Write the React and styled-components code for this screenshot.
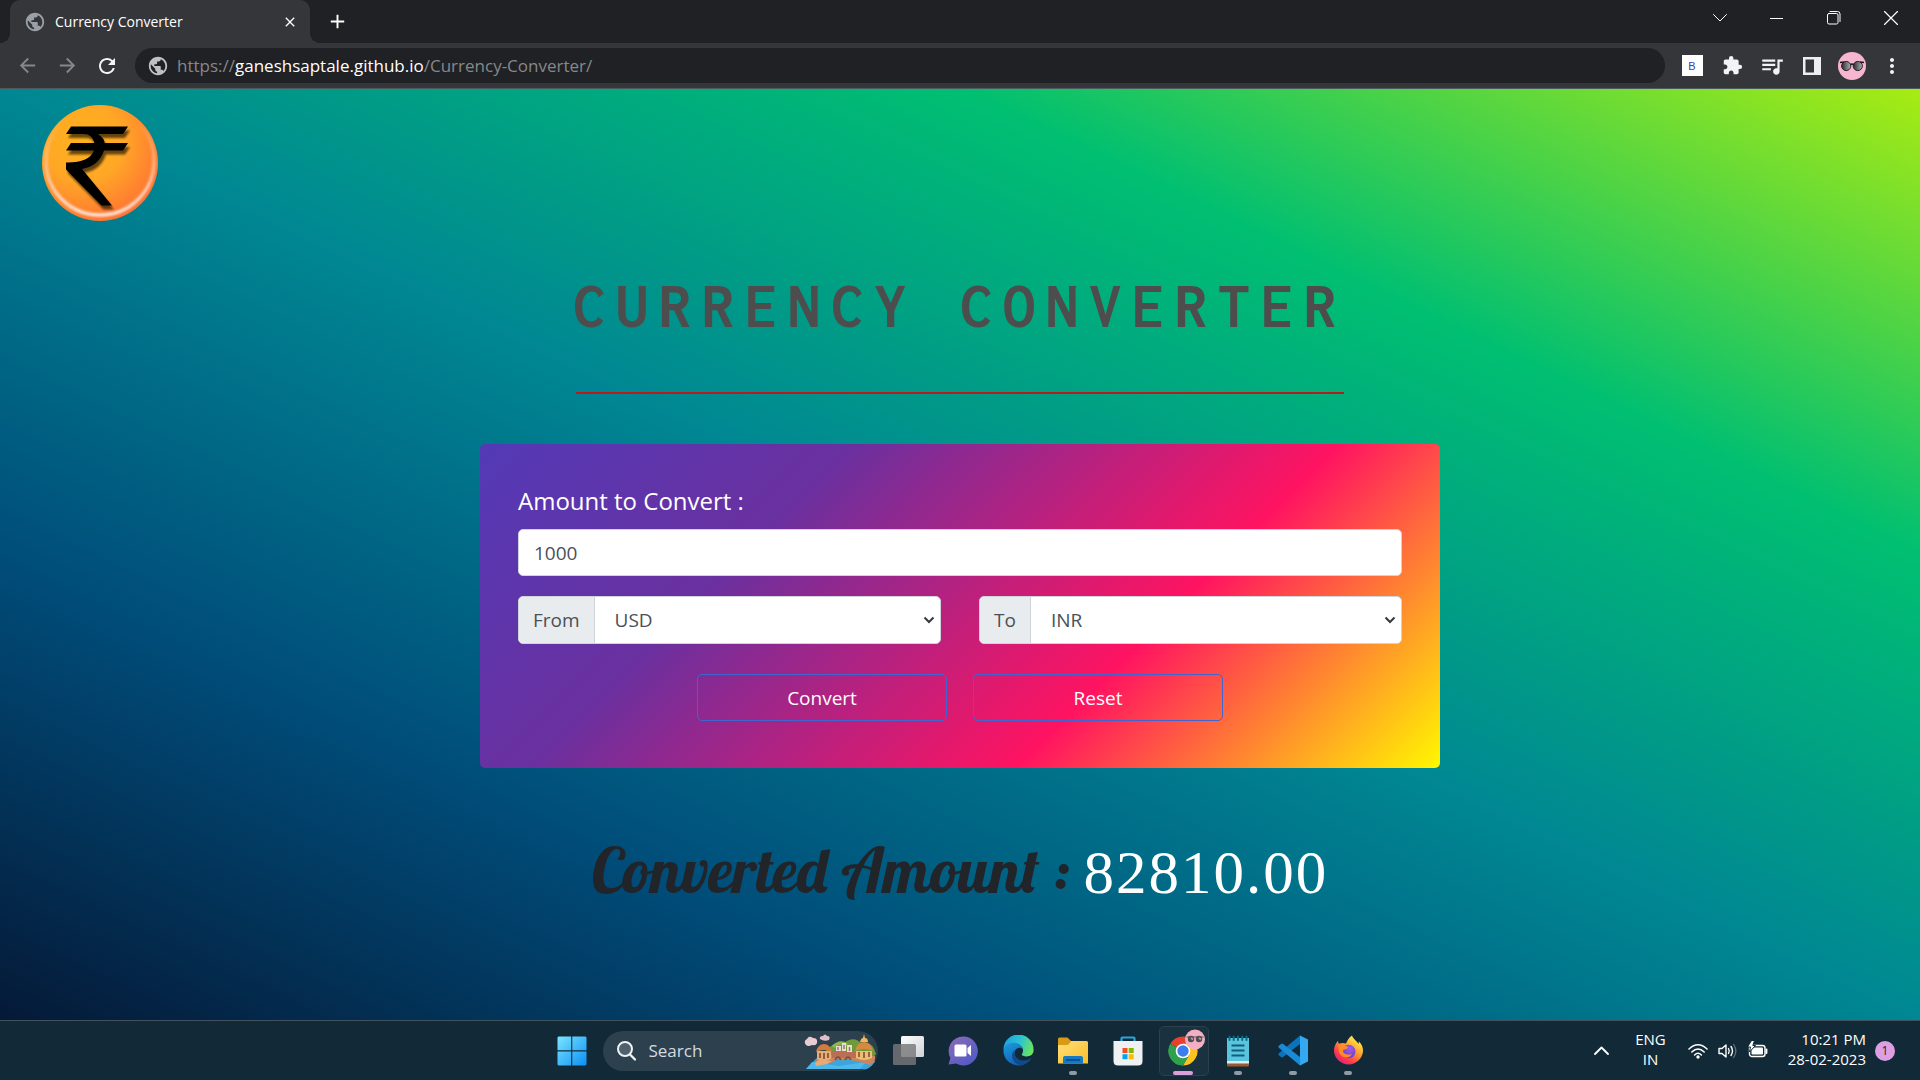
import React, { useState } from "react";
import styled, { createGlobalStyle, css } from "styled-components";
import {
  MdPublic,
  MdExtension,
  MdQueueMusic,
  MdRefresh,
  MdArrowBack,
  MdArrowForward,
  MdMoreVert,
  MdAdd,
  MdClose,
} from "react-icons/md";

const sans = `"Open Sans", "Noto Sans", sans-serif`;

const GlobalStyle = createGlobalStyle`
  *, *::before, *::after { box-sizing: border-box; }
  body { margin: 0; background: #051937; font-family: ${sans}; }
  button, input, select { font-family: inherit; }
`;

const Screen = styled.div`
  display: grid;
  grid-template-rows: auto 1fr auto;
  min-height: 100vh;
`;

/* ---------- browser frame ---------- */

const plainButton = css`
  display: flex;
  align-items: center;
  justify-content: center;
  padding: 0;
  border: 0;
  background: none;
  color: inherit;
`;

const BrowserFrame = styled.header`
  background: #35363a;
  color: #ffffff;
  border-bottom: 1px solid #4b5a5c;
`;

const TabStrip = styled.div`
  display: flex;
  align-items: stretch;
  height: 43px;
  padding: 0 1px 0 10px;
  background: #202124;
`;

const Tab = styled.div`
  position: relative;
  display: flex;
  align-items: center;
  width: 300px;
  padding: 0 10px 0 14px;
  border-radius: 10px 10px 0 0;
  background: #35363a;
  font-size: 14px;

  &::before,
  &::after {
    content: "";
    position: absolute;
    bottom: 0;
    width: 10px;
    height: 10px;
  }
  &::before {
    right: 100%;
    background: radial-gradient(circle at 0 0, #202124 10px, #35363a 10px);
  }
  &::after {
    left: 100%;
    background: radial-gradient(circle at 100% 0, #202124 10px, #35363a 10px);
  }
`;

const TabTitle = styled.span`
  flex: 1;
  margin-left: 9px;
  line-height: 20px;
`;

const TabIcon = styled.span`
  display: flex;
  color: #9aa0a6;
`;

const TabButton = styled.button`
  ${plainButton}
  width: 20px;
  height: 20px;
`;

const NewTabButton = styled.button`
  ${plainButton}
  width: 36px;
  margin-left: 9px;
`;

const WindowControls = styled.div`
  display: flex;
  margin-left: auto;
`;

const WindowButton = styled.button`
  ${plainButton}
  width: 57px;
  height: 36px;
`;

const Toolbar = styled.div`
  display: flex;
  align-items: center;
  height: 45px;
  padding: 0 8px 0 7px;
`;

const ToolButton = styled.button`
  ${plainButton}
  width: 40px;
  height: 32px;
  color: ${(p) => (p.$dim ? "#85878b" : "#f1f3f4")};
`;

const AddressBar = styled.div`
  flex: 1;
  display: flex;
  align-items: center;
  gap: 8px;
  height: 35px;
  margin: 0 7px 0 8px;
  padding-left: 12px;
  border-radius: 18px;
  background: #202124;
  color: #bdc1c6;
`;

const Address = styled.a`
  color: #85888c;
  font-size: 17px;
  line-height: 24px;
  text-decoration: none;
`;

const Host = styled.span`
  color: #ffffff;
`;

const BadgeSquare = styled.span`
  display: grid;
  place-items: center;
  width: 21px;
  height: 21px;
  background: #ffffff;
  color: #4038b8;
  font: 11px "Liberation Sans", sans-serif;
`;

/* ---------- converter page ---------- */

const Page = styled.main`
  display: flex;
  flex-direction: column;
  align-items: center;
  background: linear-gradient(to right top, #051937, #004d7a, #008793, #00bf72, #a8eb12);
`;

const LogoLink = styled.a`
  display: flex;
  align-self: flex-start;
  padding: 16px 42px 0;
`;

const Title = styled.h1`
  display: flex;
  justify-content: center;
  width: 40%;
  margin: 52px 0 50px;
  padding-bottom: 53px;
  border-bottom: 2px solid #b71c1c;
  color: #4d4d4d;
  font: bold 64px/66px "Consolas", "Inconsolata", "DejaVu Sans Mono", monospace;
  letter-spacing: 11px;
  white-space: nowrap;
  text-transform: uppercase;
`;

const Card = styled.form`
  width: 50%;
  padding: 38px 38px 47px;
  border-radius: 5px;
  background: linear-gradient(135deg, #533ab7 0%, #6a309f 29%, #ff1361 67%, #fff800 100%);
`;

const AmountLabel = styled.label`
  display: block;
  margin-bottom: 9px;
  color: #ffffff;
  font-size: 24px;
  line-height: 38px;
`;

const AmountInput = styled.input`
  display: block;
  width: 100%;
  height: 47px;
  padding: 0 15px;
  border: 1px solid #ced4da;
  border-radius: 5px;
  background: #ffffff;
  color: #495057;
  font-size: 19px;
`;

const CurrencyRow = styled.div`
  display: grid;
  grid-template-columns: 1fr 1fr;
  gap: 38px;
  margin: 20px 0 30px;
`;

const InputGroup = styled.div`
  display: flex;
  height: 48px;
  border: 1px solid #ced4da;
  border-radius: 5px;
  background: #ffffff;
  color: #495057;
  font-size: 19px;
  overflow: hidden;
`;

const GroupLabel = styled.label`
  display: flex;
  align-items: center;
  padding: 0 14px;
  border-right: 1px solid #ced4da;
  background: #e9ecef;
`;

const SelectBox = styled.div`
  flex: 1;
  display: grid;
  grid-template-columns: 1fr auto;
  align-items: stretch;

  svg {
    grid-area: 1 / 2;
    align-self: center;
    margin-right: 5px;
    pointer-events: none;
  }
`;

const CurrencySelect = styled.select`
  grid-area: 1 / 1 / 2 / 3;
  appearance: none;
  padding: 0 20px;
  border: 0;
  background: transparent;
  color: inherit;
  font-size: 19px;
`;

const Actions = styled.div`
  display: flex;
  justify-content: center;
  gap: 26px;
`;

const ActionButton = styled.button`
  width: 250px;
  height: 47px;
  padding: 0;
  border: 1px solid #3f66d0;
  border-radius: 5px;
  background: transparent;
  color: #ffffff;
  font-size: 19px;
`;

const Result = styled.h2`
  margin: 66px 0 60px;
  color: #212529;
  font: normal 63px/72px "Lobster", "Liberation Serif", serif;
`;

const ResultValue = styled.output`
  color: #ffffff;
  font: normal 61px/72px "Liberation Serif", serif;
  letter-spacing: 2px;
`;

/* ---------- taskbar ---------- */

const Taskbar = styled.footer`
  display: grid;
  grid-template-columns: 1fr auto 1fr;
  align-items: stretch;
  height: 60px;
  border-top: 1px solid #42525c;
  background: #122a38;
  color: #ffffff;
`;

const Apps = styled.nav`
  grid-column: 2;
  display: flex;
  align-items: center;
`;

const AppButton = styled.button`
  ${plainButton}
  position: relative;
  width: 55px;
  height: 50px;

  &::before {
    content: "";
    position: absolute;
    inset: 0 2px 0 3px;
    border-radius: 5px;
    border: ${(p) => (p.$active ? "1px solid #2b404c" : "0")};
    background: ${(p) => (p.$active ? "#21384580" : "none")};
  }

  &::after {
    content: "";
    position: absolute;
    bottom: 1px;
    width: ${(p) => (p.$active ? "20px" : "8px")};
    height: 4px;
    border-radius: 2px;
    background: ${(p) => (p.$active ? "#d9a0dc" : p.$open ? "#8f9ba4" : "none")};
  }

  svg {
    position: relative;
  }
`;

const SearchBox = styled.label`
  display: flex;
  align-items: center;
  width: 275px;
  height: 40px;
  margin: 0 3px;
  padding-left: 14px;
  border-radius: 20px;
  background: #2c404e;
  overflow: hidden;
`;

const SearchInput = styled.input`
  flex: 1;
  min-width: 0;
  padding: 0 0 0 13px;
  border: 0;
  background: none;
  color: #d5dbe0;
  font-size: 17px;

  &::placeholder {
    color: #d5dbe0;
    opacity: 1;
  }
`;

const Tray = styled.div`
  display: flex;
  align-items: center;
  justify-content: flex-end;
  padding-right: 25px;
  font-size: 15px;
  line-height: 20px;
`;

const TrayButton = styled.button`
  ${plainButton}
  width: 20px;
  height: 40px;
`;

const Language = styled.div`
  margin: 0 22px 0 24px;
  padding-bottom: 3px;
  text-align: center;
`;

const StatusIcons = styled.div`
  display: flex;
  gap: 10px;
`;

const Clock = styled.time`
  margin: 0 9px 0 20px;
  padding-bottom: 3px;
  text-align: right;
`;

const Notice = styled.span`
  display: grid;
  place-items: center;
  width: 20px;
  height: 20px;
  border-radius: 50%;
  background: #de9fe2;
  color: #1d2733;
  font-size: 12px;
`;

/* ---------- drawings ---------- */

const Glasses = ({ size }) => (
  <svg width={size} height={size} viewBox="0 0 28 28">
    <defs>
      <linearGradient id="lens" x1="0" x2="1">
        <stop offset="0" stopColor="#2a2a2e" />
        <stop offset="1" stopColor="#a9b3b5" />
      </linearGradient>
    </defs>
    <circle cx="14" cy="14" r="14" fill="#f6b6cf" />
    <circle cx="8.2" cy="14" r="4.6" fill="url(#lens)" stroke="#2b2225" strokeWidth="1" />
    <circle cx="19.8" cy="14" r="4.6" fill="url(#lens)" stroke="#2b2225" strokeWidth="1" />
    <path d="M2 10.5 L6 10M26 10.5 L22 10M12.5 12.6Q14 11.4 15.5 12.6" fill="none" stroke="#1c1517" strokeWidth="1.6" />
  </svg>
);

const SidePanelIcon = () => (
  <svg width="18" height="18" viewBox="0 0 18 18">
    <path d="M0 0H18V18H0ZM2.5 2.5V15.5H11V2.5Z" fill="#eceff1" fillRule="evenodd" />
  </svg>
);

const RupeeLogo = () => (
  <svg width="116" height="116" viewBox="0 0 116 116">
    <defs>
      <radialGradient id="coin" cx="0.36" cy="0.32" r="0.75">
        <stop offset="0" stopColor="#ffb31c" />
        <stop offset="0.45" stopColor="#ffa726" />
        <stop offset="1" stopColor="#ff6e35" />
      </radialGradient>
      <linearGradient id="rim" x1="0" y1="0" x2="0" y2="1">
        <stop offset="0.15" stopColor="#ffd9b0" stopOpacity="0" />
        <stop offset="0.6" stopColor="#ffc9a8" stopOpacity="0.75" />
        <stop offset="1" stopColor="#ffe3d6" />
      </linearGradient>
      <filter id="soft">
        <feGaussianBlur stdDeviation="1.1" />
      </filter>
      <g id="rupee">
        <path d="M29 21.5H86L81 29H56Q63 34 62.5 38H86L81 45.5H62Q57 61 40 64L70 100.5H59.5L24 64.500V57.500Q47 58 52 45.500H24L29 38H52.500Q50 29 42 29H24Z" />
      </g>
    </defs>
    <circle cx="58" cy="58" r="58" fill="url(#coin)" />
    <circle cx="58" cy="56" r="54" fill="none" stroke="url(#rim)" strokeWidth="3.5" filter="url(#soft)" />
    <use href="#rupee" x="2" y="4" opacity="0.6" filter="url(#soft)" />
    <use href="#rupee" fill="#000000" />
  </svg>
);

const SelectArrow = () => (
  <svg width="12" height="8" viewBox="0 0 12 8">
    <path d="M1.500 1.500L6 6L10.500 1.500" fill="none" stroke="#343a40" strokeWidth="2" />
  </svg>
);

const WindowsLogo = () => (
  <svg width="30" height="30" viewBox="0 0 30 30">
    <defs>
      <linearGradient id="win" x1="0" y1="0" x2="30" y2="30" gradientUnits="userSpaceOnUse">
        <stop offset="0" stopColor="#7be8ff" />
        <stop offset="1" stopColor="#0a8df5" />
      </linearGradient>
    </defs>
    <path d="M1.500 0.500H14.200V14.200H0.500V1.500ZM15.300 0.500H28.500L29.500 1.500V14.200H15.300ZM0.500 15.500H14.200V29.500H1.500L0.500 28.500ZM15.300 15.500H29.500V28.500L28.500 29.500H15.300Z" fill="url(#win)" />
  </svg>
);

const SearchGlass = () => (
  <svg width="19" height="20" viewBox="0 0 19 20">
    <circle cx="8" cy="8" r="7" fill="#50616d" stroke="#eef1f3" strokeWidth="2" />
    <path d="M13 13.500L18 18.500" stroke="#eef1f3" strokeWidth="2.400" strokeLinecap="round" />
  </svg>
);

const SearchArt = () => (
  <svg width="74" height="40" viewBox="0 0 74 40">
    <path d="M2 38C7 37 8 29 15 26L62 27L74 31V38Q70 40 58 38Z" fill="#3aa5de" />
    <path d="M2 38L8 31L35 35L62 31L56 38Z" fill="#4fb8ea" />
    <path d="M22 19Q31 10 40 12Q50 4 58 13Q68 9 72 23L66 29H24Z" fill="#6d9b3c" />
    <path d="M29 16Q36 9 43 14" fill="none" stroke="#8cb74e" strokeWidth="3" />
    <path d="M11 33L13 27L30 23L50 25L71 25Q72 31 66 34L56 31L46 29Q42 25 38 30Q34 25 30 31L22 33Z" fill="#c9855e" />
    <path d="M11 32L15 29L28 30L23 33L12 35Z" fill="#e8aa77" />
    <path d="M28 21H52V27H28Z" fill="#b86f54" />
    <path d="M31 29Q34 23 37 29M41 29Q44 23 47 29" fill="none" stroke="#7d4a43" strokeWidth="1.500" />
    <path d="M13 20H27V28Q20 32 13 28Z" fill="#e6ad75" />
    <path d="M12 21Q14 13 20 13Q26 13 28 21Q20 17 12 21Z" fill="#d37a3c" />
    <path d="M16 22V27M20 22V28M24 22V27" stroke="#8d5137" strokeWidth="1.800" />
    <path d="M32 15H37V20H32ZM38 12H42V20H38ZM43 14H48V21H43Z" fill="#eadcd4" />
    <path d="M34 16V19M40 14V18M45.500 16V20" stroke="#9c6c69" strokeWidth="1.400" />
    <path d="M52 20H68V27Q60 31 52 27Z" fill="#eebd74" />
    <path d="M51 20Q53 11 60 11Q67 11 69 20Q60 16 51 20Z" fill="#d58a3e" />
    <path d="M56 11Q57 7 59 7L60 3L61 7Q64 7 64 11Z" fill="#efb75c" />
    <path d="M55 21V26M60 21V27M65 21V26" stroke="#8d5a32" strokeWidth="1.800" />
    <path d="M2 14Q-1 10 3 8Q5 4 9 7Q14 7 13 12Q12 15 8 14Q4 16 2 14Z" fill="#e9cbd3" />
    <path d="M16 8Q15 5 19 5Q21 2 23 5Q27 5 25 9Q20 11 16 8Z" fill="#dfc0c9" />
  </svg>
);

const TaskViewIcon = () => (
  <svg width="31" height="29" viewBox="0 0 31 29">
    <defs>
      <linearGradient id="tv" x1="0" y1="0" x2="1" y2="1">
        <stop offset="0" stopColor="#ffffff" />
        <stop offset="1" stopColor="#cfd2d4" />
      </linearGradient>
    </defs>
    <rect x="8" y="0" width="23" height="21" rx="1.500" fill="url(#tv)" />
    <rect x="0" y="8" width="23" height="21" rx="1.500" fill="#77787a" fillOpacity="0.820" />
  </svg>
);

const ChatIcon = () => (
  <svg width="30" height="30" viewBox="0 0 30 30">
    <defs>
      <linearGradient id="chat" x1="0" y1="0" x2="0.800" y2="1">
        <stop offset="0" stopColor="#8b6db5" />
        <stop offset="1" stopColor="#5059c9" />
      </linearGradient>
    </defs>
    <path d="M15 0.500A14.500 14.500 0 1 1 8 27.500L0.500 28.500L2.400 22A14.500 14.500 0 0 1 15 0.500Z" fill="url(#chat)" />
    <rect x="6.500" y="8.500" width="12" height="12" rx="1.500" fill="#ffffff" />
    <path d="M19.500 12L23 9V20L19.500 17Z" fill="#ffffff" />
  </svg>
);

const EdgeIcon = () => (
  <svg width="31" height="31" viewBox="0 0 31 31">
    <defs>
      <linearGradient id="edgeTop" x1="0" y1="0.300" x2="1" y2="0.600">
        <stop offset="0" stopColor="#1ea1e2" />
        <stop offset="0.500" stopColor="#2bc3d2" />
        <stop offset="1" stopColor="#6be65c" />
      </linearGradient>
      <linearGradient id="edgeLeft" x1="0" y1="0" x2="0.500" y2="1">
        <stop offset="0" stopColor="#1b9de2" />
        <stop offset="1" stopColor="#1460b0" />
      </linearGradient>
    </defs>
    <path d="M0.500 14A15 15 0 0 1 30.500 15C31 21 24 23 19.500 20.500C17.500 19.500 20.500 18.500 20 14.500C19 9 7 6 0.500 14Z" fill="url(#edgeTop)" />
    <path d="M0.500 15C1 9 8 7 13 8C18 9 20 12.500 20 14.500C18 11.500 13.500 12.500 12 16C10 22 14 29 21.500 29.500C11 33 0 26 0.500 15Z" fill="url(#edgeLeft)" />
    <path d="M12.500 14.500C9.500 18 13 25.500 20 25.500C24 25.500 26.500 24 28.500 23C25.500 29 18 32 13.500 28.500C7.500 24.500 8 17.500 12.500 14.500Z" fill="#114a8b" />
  </svg>
);

const FolderIcon = () => (
  <svg width="30" height="28" viewBox="0 0 30 28">
    <defs>
      <linearGradient id="folder" x1="0" y1="0" x2="1" y2="1">
        <stop offset="0" stopColor="#ffe07a" />
        <stop offset="1" stopColor="#f8bd28" />
      </linearGradient>
    </defs>
    <path d="M0 2Q0 0.500 1.500 0.500H9.500L13 4V10H0Z" fill="#d99a16" />
    <path d="M0 8H9Q11 8 13 4H28.500Q30 4 30 5.500V26.500H0Z" fill="url(#folder)" />
    <path d="M5 26.500V21Q5 19 7 19H23Q25 19 25 21V26.500Z" fill="#1679c4" />
    <path d="M8 23H22" stroke="#0b4f8f" strokeWidth="1.800" />
  </svg>
);

const StoreIcon = () => (
  <svg width="30" height="30" viewBox="0 0 30 30">
    <path d="M8.500 7V2.500Q8.500 1.500 9.500 1.500H20.500Q21.500 1.500 21.500 2.500V7" fill="none" stroke="#2aa5df" strokeWidth="2.200" />
    <path d="M0.500 5H29.500V25Q29.500 29.500 25 29.500H5Q0.500 29.500 0.500 25Z" fill="#eef0f2" />
    <path d="M9.500 12H14.500V17H9.500Z" fill="#f05022" />
    <path d="M15.700 12H20.700V17H15.700Z" fill="#7fba00" />
    <path d="M9.500 18.200H14.500V23.200H9.500Z" fill="#00a4ef" />
    <path d="M15.700 18.200H20.700V23.200H15.700Z" fill="#ffb900" />
  </svg>
);

const ChromeIcon = () => (
  <svg width="44" height="44" viewBox="-4 2 44 44">
    <path d="M18 24L5.440 16.750A14.500 14.500 0 0 1 30.560 16.750Z" fill="#e8402f" />
    <path d="M18 24L18 38.500A14.500 14.500 0 0 1 5.440 16.750Z" fill="#2da14c" />
    <path d="M18 16.750H30.560A14.500 14.500 0 0 1 18 38.500L24.300 27.600Z" fill="#fcc31e" />
    <path d="M5.440 16.750L11.700 27.600L24.300 27.600L18 38.500A14.500 14.500 0 0 1 5.440 16.750Z" fill="#2da14c" />
    <circle cx="18" cy="24" r="7.300" fill="#ffffff" />
    <circle cx="18" cy="24" r="5.700" fill="#3b7ded" />
    <g transform="translate(20 2.500)">
      <circle cx="10" cy="10" r="10" fill="#f1b0c4" />
      <circle cx="6" cy="9.500" r="3.200" fill="#514a50" />
      <circle cx="14" cy="9.500" r="3.200" fill="#514a50" />
      <path d="M1.500 7.500H18.500" stroke="#5f5157" strokeWidth="1" />
      <path d="M6 8.500L8 10M14 8.500L16 10" stroke="#aaa2a8" strokeWidth="1.600" />
    </g>
  </svg>
);

const NotepadIcon = () => (
  <svg width="24" height="32" viewBox="0 0 24 32">
    <path d="M1 29H23V30.500Q23 31.500 22 31.500H2Q1 31.500 1 30.500Z" fill="#a0592b" />
    <path d="M1 3H23V28.500H1Z" fill="#5ac4dc" />
    <path d="M1 26H23V28.500H1Z" fill="#d7eef2" />
    <path d="M3.500 1.500V5M7.700 1.500V5M12 1.500V5M16.300 1.500V5M20.500 1.500V5" stroke="#0d6c86" strokeWidth="2" strokeLinecap="round" />
    <path d="M5.500 10.500H18.500M5.500 15.500H18.500M5.500 20.500H18.500" stroke="#0f5c7d" strokeWidth="2" />
  </svg>
);

const CodeIcon = () => (
  <svg width="31" height="31" viewBox="0 0 31 31">
    <path d="M22 0.500L30 4.500V26.500L22 30.500Z" fill="#35a8f0" />
    <path d="M22 0.500V9L4.500 22.500L3 22L0.500 20V18.500Z" fill="#0b72bd" />
    <path d="M22 30.500V22L4.500 8.500L3 9L0.500 11V12.500Z" fill="#1b8ad6" />
  </svg>
);

const FirefoxIcon = () => (
  <svg width="31" height="31" viewBox="0 0 31 31">
    <defs>
      <linearGradient id="fox" x1="0.800" y1="0.100" x2="0.200" y2="0.950">
        <stop offset="0" stopColor="#fff04a" />
        <stop offset="0.400" stopColor="#ff9a2b" />
        <stop offset="0.750" stopColor="#ff3b4d" />
        <stop offset="1" stopColor="#e01f7b" />
      </linearGradient>
      <radialGradient id="globe" cx="0.600" cy="0.300" r="0.800">
        <stop offset="0" stopColor="#a15bf0" />
        <stop offset="1" stopColor="#5b3bc4" />
      </radialGradient>
    </defs>
    <path d="M19 0.500C20 4 23.500 5.500 25.500 9C26 8 26 7 25.800 6.200C29 9.500 30.300 13 30 16.500A14.600 14.600 0 0 1 1 16.500C0.800 12 2.500 8.500 5 5.800C5 7 5.300 7.800 6 8.700C8 7.600 11 7.700 13 8.500C14.500 5 15.500 3 19 0.500Z" fill="url(#fox)" />
    <circle cx="15.700" cy="16.500" r="6.800" fill="url(#globe)" />
    <path d="M5.500 9.500C8.500 8.500 12 9.500 15.500 12.500C14 14.500 11 14 10 15.500C10 19 14.500 20.500 19 19C16 25 6.500 23 5.500 15Z" fill="#ff8a2a" />
  </svg>
);

const stroke = { fill: "none", stroke: "#ffffff", strokeLinecap: "round", strokeLinejoin: "round" };

const WifiIcon = () => (
  <svg width="20" height="20" viewBox="0 0 20 20">
    <path d="M1 8Q10 -0.500 19 8M3.800 11Q10 5 16.200 11M6.600 14Q10 10.600 13.400 14" {...stroke} strokeWidth="1.500" />
    <circle cx="10" cy="16" r="1.700" fill="#ffffff" />
  </svg>
);

const VolumeIcon = () => (
  <svg width="20" height="20" viewBox="0 0 20 20">
    <path d="M1 7.500H4L8 4V16L4 12.500H1Z" {...stroke} strokeWidth="1.400" />
    <path d="M10.500 7.500Q12 10 10.500 12.500M13 5.500Q16 10 13 14.500" {...stroke} strokeWidth="1.400" />
    <path d="M15.700 3.500Q20 10 15.700 16.500" {...stroke} stroke="#60717c" strokeWidth="1.300" />
  </svg>
);

const BatteryIcon = () => (
  <svg width="20" height="20" viewBox="0 0 20 20">
    <rect x="1.500" y="4.500" width="15.500" height="11" rx="2.500" {...stroke} strokeWidth="1.400" />
    <rect x="3.500" y="6.500" width="11.500" height="7" rx="1" fill="#ffffff" />
    <path d="M18.500 8.500V12" {...stroke} strokeWidth="1.800" />
    <path d="M3.500 -0.500L-0.500 6H2.500L1.500 11L7.500 4.500H4.800L6.500 -0.500Z" fill="#ffffff" stroke="#122a38" strokeWidth="1" />
  </svg>
);

const currencies = ["USD", "INR", "EUR", "GBP", "JPY"];

const pinned = [
  { name: "Task view", Icon: TaskViewIcon },
  { name: "Chat", Icon: ChatIcon },
  { name: "Edge", Icon: EdgeIcon },
  { name: "File Explorer", Icon: FolderIcon, open: true },
  { name: "Store", Icon: StoreIcon },
  { name: "Chrome", Icon: ChromeIcon, active: true },
  { name: "Notepad", Icon: NotepadIcon, open: true },
  { name: "Code", Icon: CodeIcon, open: true },
  { name: "Firefox", Icon: FirefoxIcon, open: true },
];

function CurrencyPicker({ id, label, value, onChange }) {
  return (
    <InputGroup>
      <GroupLabel htmlFor={id}>{label}</GroupLabel>
      <SelectBox>
        <CurrencySelect id={id} value={value} onChange={(e) => onChange(e.target.value)}>
          {currencies.map((c) => (
            <option key={c}>{c}</option>
          ))}
        </CurrencySelect>
        <SelectArrow />
      </SelectBox>
    </InputGroup>
  );
}

export default function App() {
  const [amount, setAmount] = useState("1000");
  const [from, setFrom] = useState("USD");
  const [to, setTo] = useState("INR");

  return (
    <Screen>
      <GlobalStyle />
      <BrowserFrame>
        <TabStrip>
          <Tab>
            <TabIcon><MdPublic size={22} /></TabIcon>
            <TabTitle>Currency Converter</TabTitle>
            <TabButton aria-label="Close tab"><MdClose size={16} /></TabButton>
          </Tab>
          <NewTabButton aria-label="New tab"><MdAdd size={23} /></NewTabButton>
          <WindowControls>
            <WindowButton aria-label="Search tabs">
              <svg width="14" height="8" viewBox="0 0 14 8"><path d="M0.500 0.500L7 7L13.500 0.500" {...stroke} strokeWidth="1" /></svg>
            </WindowButton>
            <WindowButton aria-label="Minimize">
              <svg width="13" height="3" viewBox="0 0 13 3"><path d="M0 1.500H13" stroke="#ffffff" strokeWidth="1" /></svg>
            </WindowButton>
            <WindowButton aria-label="Restore">
              <svg width="14" height="14" viewBox="0 0 14 14">
                <rect x="0.500" y="2.500" width="10.500" height="10.500" rx="1.500" {...stroke} strokeWidth="1" />
                <path d="M3 0.500H10.500Q13 0.500 13 3V10.500" {...stroke} strokeWidth="1" />
              </svg>
            </WindowButton>
            <WindowButton aria-label="Close window">
              <svg width="14" height="14" viewBox="0 0 14 14"><path d="M0.500 0.500L13.500 13.500M13.500 0.500L0.500 13.500" {...stroke} strokeWidth="1.200" /></svg>
            </WindowButton>
          </WindowControls>
        </TabStrip>
        <Toolbar>
          <ToolButton $dim aria-label="Back"><MdArrowBack size={23} /></ToolButton>
          <ToolButton $dim aria-label="Forward"><MdArrowForward size={23} /></ToolButton>
          <ToolButton aria-label="Reload"><MdRefresh size={24} /></ToolButton>
          <AddressBar>
            <MdPublic size={22} />
            <Address href="#top">https://<Host>ganeshsaptale.github.io</Host>/Currency-Converter/</Address>
          </AddressBar>
          <ToolButton aria-label="Extension B"><BadgeSquare>B</BadgeSquare></ToolButton>
          <ToolButton aria-label="Extensions"><MdExtension size={21} /></ToolButton>
          <ToolButton aria-label="Media"><MdQueueMusic size={26} /></ToolButton>
          <ToolButton aria-label="Side panel"><SidePanelIcon /></ToolButton>
          <ToolButton aria-label="Profile"><Glasses size={28} /></ToolButton>
          <ToolButton aria-label="Menu"><MdMoreVert size={24} /></ToolButton>
        </Toolbar>
      </BrowserFrame>

      <Page id="top">
        <LogoLink href="#top" aria-label="Home"><RupeeLogo /></LogoLink>
        <Title>Currency Converter</Title>
        <Card onSubmit={(e) => e.preventDefault()}>
          <AmountLabel htmlFor="amount">Amount to Convert :</AmountLabel>
          <AmountInput id="amount" value={amount} onChange={(e) => setAmount(e.target.value)} />
          <CurrencyRow>
            <CurrencyPicker id="from" label="From" value={from} onChange={setFrom} />
            <CurrencyPicker id="to" label="To" value={to} onChange={setTo} />
          </CurrencyRow>
          <Actions>
            <ActionButton type="submit">Convert</ActionButton>
            <ActionButton type="button" onClick={() => setAmount("")}>Reset</ActionButton>
          </Actions>
        </Card>
        <Result>
          Converted Amount : <ResultValue htmlFor="amount from to">82810.00</ResultValue>
        </Result>
      </Page>

      <Taskbar>
        <Apps>
          <AppButton aria-label="Start"><WindowsLogo /></AppButton>
          <SearchBox>
            <SearchGlass />
            <SearchInput placeholder="Search" aria-label="Search" />
            <SearchArt />
          </SearchBox>
          {pinned.map(({ name, Icon, open, active }) => (
            <AppButton key={name} aria-label={name} $open={open} $active={active}>
              <Icon />
            </AppButton>
          ))}
        </Apps>
        <Tray>
          <TrayButton aria-label="Hidden icons">
            <svg width="15" height="9" viewBox="0 0 15 9"><path d="M1 8L7.500 1.500L14 8" {...stroke} strokeWidth="1.800" /></svg>
          </TrayButton>
          <Language>ENG<br />IN</Language>
          <StatusIcons>
            <WifiIcon />
            <VolumeIcon />
            <BatteryIcon />
          </StatusIcons>
          <Clock>10:21 PM<br />28-02-2023</Clock>
          <Notice>1</Notice>
        </Tray>
      </Taskbar>
    </Screen>
  );
}
